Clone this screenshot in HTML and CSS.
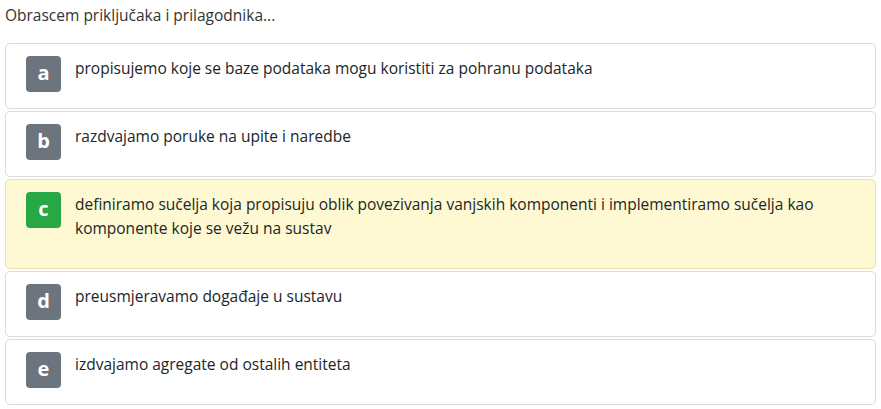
FILE: index.html
```html
<!DOCTYPE html>
<html lang="hr">
<head>
<meta charset="utf-8">
<link rel="stylesheet" href="styles.css">
</head>
<body>
<div class="question">
  <p class="prompt">Obrascem priključaka i prilagodnika...</p>
  <div class="options">
    <div class="option">
      <span class="badge">a</span>
      <p class="text">propisujemo koje se baze podataka mogu koristiti za pohranu podataka</p>
    </div>
    <div class="option">
      <span class="badge">b</span>
      <p class="text">razdvajamo poruke na upite i naredbe</p>
    </div>
    <div class="option correct">
      <span class="badge">c</span>
      <p class="text">definiramo sučelja koja propisuju oblik povezivanja vanjskih komponenti i implementiramo sučelja kao komponente koje se vežu na sustav</p>
    </div>
    <div class="option">
      <span class="badge">d</span>
      <p class="text">preusmjeravamo događaje u sustavu</p>
    </div>
    <div class="option">
      <span class="badge">e</span>
      <p class="text">izdvajamo agregate od ostalih entiteta</p>
    </div>
  </div>
</div>
</body>
</html>
```
FILE: styles.css
```css
* { box-sizing: border-box; }
html, body { margin: 0; padding: 0; background: #fff; }
body {
  font-family: "Open Sans", "Noto Sans", sans-serif;
  font-size: 15.5px;
  color: #212529;
}
.question { padding: 3px 5px 0 5px; }
.prompt {
  margin: 0 0 16px 0;
  line-height: 24px;
  color: #333;
}
.options { display: flex; flex-direction: column; gap: 2px; }
.option {
  display: flex;
  align-items: flex-start;
  gap: 14px;
  padding: 12px 20px;
  border: 1px solid #dcdcdc;
  border-radius: 5px;
  background: #fff;
}
.option.correct {
  background: #fef9d2;
  border-color: #e8e2b4;
}
.badge {
  flex: 0 0 35px;
  width: 35px;
  height: 36px;
  border-radius: 4px;
  background: #6c757d;
  color: #fff;
  font-weight: 700;
  font-size: 20px;
  line-height: 34px;
  text-align: center;
}
.correct .badge { background: #28a745; }
.text {
  margin: 0 0 16px 0;
  line-height: 24px;
}
```
